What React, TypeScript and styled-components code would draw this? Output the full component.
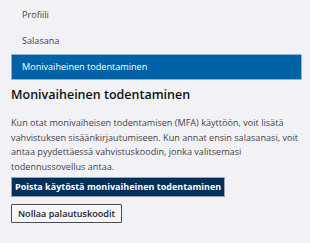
import styled, { createGlobalStyle } from "styled-components"

const colors = {
  page: '#f1f1f6',
  text: '#444448',
  heading: '#111111',
  active: '#0063a8',
  navy: '#02305a',
}

const GlobalStyle = createGlobalStyle`
  html, body {
    margin: 0;
    padding: 0;
    background: ${colors.page};
  }
  body {
    font-family: "Open Sans", "Noto Sans", sans-serif;
    color: ${colors.text};
  }
`

const navItems = ['Profiili', 'Salasana', 'Monivaiheinen todentaminen']

function App() {
  const selectIndex = 2
  return <Page>
    <GlobalStyle/>
    <SideNav>
      {navItems.map((name, index) => (
        <NavItem key={name} active={index == selectIndex}>{name}</NavItem>
      ))}
    </SideNav>
    <Section>
      <Title>Monivaiheinen todentaminen</Title>
      <Description>
        Kun otat monivaiheisen todentamisen (MFA) käyttöön, voit lisätä
        vahvistuksen sisäänkirjautumiseen. Kun annat ensin salasanasi, voit
        antaa pyydettäessä vahvistuskoodin, jonka valitsemasi<br/>
        todennussovellus antaa.
      </Description>
      <Actions>
        <DangerButton>Poista käytöstä monivaiheinen todentaminen</DangerButton>
        <PlainButton>Nollaa palautuskoodit</PlainButton>
      </Actions>
    </Section>
  </Page>
}

const Page = styled.div`
  width: 310px;
  min-height: 243px;
  background: ${colors.page};
  box-sizing: border-box;
`
const SideNav = styled.nav`
  display: flex;
  flex-direction: column;
  padding: 1.5px 8px 0 11px;
`
const NavItem = styled.div<{ active: boolean }>`
  display: flex;
  align-items: center;
  height: 26px;
  box-sizing: border-box;
  padding-left: 10px;
  font-size: 9.1px;
  color: ${({ active }) => active ? '#ffffff' : colors.text};
  background: ${({ active }) => active ? colors.active : 'transparent'};
  border: 1px solid ${({ active }) => active ? '#8db3d6' : 'transparent'};
  border-radius: 1px;
`
const Section = styled.section`
  display: flex;
  flex-direction: column;
  padding: 7.5px 8px 0 11px;
`
const Title = styled.h2`
  margin: 0;
  font-size: 12.5px;
  line-height: 16px;
  font-weight: 600;
  color: ${colors.heading};
`
const Description = styled.p`
  margin: 13px 0 0;
  font-size: 9.1px;
  line-height: 14.6px;
  color: ${colors.text};
`
const Actions = styled.div`
  display: flex;
  flex-direction: column;
  align-items: flex-start;
  gap: 7px;
  margin-top: 2.5px;
`
const DangerButton = styled.button`
  height: 20px;
  padding: 0 3px;
  font-family: "Open Sans", "Noto Sans", sans-serif;
  font-size: 9px;
  font-weight: 700;
  color: #ffffff;
  background: ${colors.navy};
  border: 1px solid #93a6ba;
  border-radius: 0;
`
const PlainButton = styled.button`
  height: 19px;
  padding: 0 6px;
  font-family: "Open Sans", "Noto Sans", sans-serif;
  font-size: 9.1px;
  font-weight: 600;
  color: #222;
  background: #f6f6fa;
  border: 1px solid #4c4c52;
  border-radius: 1px;
`

export default App
